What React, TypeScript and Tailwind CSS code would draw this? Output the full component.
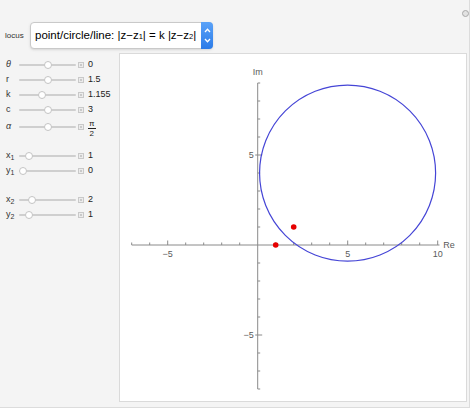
import React from "react";

const FONT = { fontFamily: '"Liberation Sans", Arial, sans-serif' };

type SliderProps = {
  label: React.ReactNode;
  pos: number; // thumb position, 0..1
  value: React.ReactNode;
  tall?: boolean;
};

function Slider({ label, pos, value, tall }: SliderProps) {
  return (
    <div className={`flex items-center ${tall ? "h-[20px]" : "h-[15px]"}`}>
      <div className="w-[19px] pl-[6px] text-[9px] text-[#333]">{label}</div>
      <div className="relative w-[57px] h-[8px] flex items-center">
        <div className="w-full h-[2px] rounded bg-[#cfcfcf]" />
        <div
          className="absolute top-0 w-[8px] h-[8px] -ml-[4px] rounded-full bg-white border border-[#c4c4c4]"
          style={{ left: `${pos * 57}px` }}
        />
      </div>
      <div className="ml-[2px] w-[6px] h-[6px] border border-[#c9c9c9] bg-[#ececec] flex items-center justify-center">
        <div className="w-[2px] h-[2px] bg-[#c9c9c9]" />
      </div>
      <div className="ml-[4px] text-[9px] text-[#222]">{value}</div>
    </div>
  );
}

function Sub({ b, s }: { b: string; s: string }) {
  return (
    <span>
      {b}
      <sub className="text-[7px]">{s}</sub>
    </span>
  );
}

function Plot() {
  const ox = 137.7;
  const oy = 191;
  const u = 18;
  const X = (x: number) => ox + x * u;
  const Y = (y: number) => oy - y * u;
  const xs = Array.from({ length: 18 }, (_, i) => i - 7);
  const ys = Array.from({ length: 18 }, (_, i) => i - 8);
  const k = 1.155;
  const k2 = k * k;
  const cx = (k2 * 2 - 1) / (k2 - 1);
  const cy = (k2 * 1 - 0) / (k2 - 1);
  const r = (k * Math.SQRT2) / (k2 - 1);
  const axis = "#8a8a8a";
  const lab = "#5a5a5a";

  return (
    <svg width="346" height="347" className="block">
      {/* x axis */}
      <line x1={X(-7)} y1={oy} x2={X(10.1)} y2={oy} stroke={axis} strokeWidth="1" />
      {xs.map((x) =>
        x === 0 ? null : (
          <line
            key={x}
            x1={X(x)}
            x2={X(x)}
            y1={oy}
            y2={oy - (x % 5 === 0 ? 4.5 : 2.5)}
            stroke={axis}
            strokeWidth="1"
          />
        )
      )}
      {/* y axis */}
      <line x1={ox} y1={Y(9)} x2={ox} y2={Y(-8)} stroke={axis} strokeWidth="1" />
      {ys.map((y) =>
        y === 0 ? null : (
          <line
            key={y}
            y1={Y(y)}
            y2={Y(y)}
            x1={ox}
            x2={ox + (y % 5 === 0 ? 4.5 : 2.5)}
            stroke={axis}
            strokeWidth="1"
          />
        )
      )}
      <line x1={ox - 2.5} x2={ox} y1={Y(5)} y2={Y(5)} stroke={axis} />
      <line x1={ox - 2.5} x2={ox} y1={Y(-5)} y2={Y(-5)} stroke={axis} />
      <g fontSize="9" fill={lab} style={FONT}>
        <text x={X(-5)} y={oy + 12} textAnchor="middle">−5</text>
        <text x={X(5)} y={oy + 12} textAnchor="middle">5</text>
        <text x={X(10)} y={oy + 12} textAnchor="middle">10</text>
        <text x={ox - 4} y={Y(5) + 3} textAnchor="end">5</text>
        <text x={ox - 4} y={Y(-5) + 3} textAnchor="end">−5</text>
        <text x={ox} y={Y(9) - 8} textAnchor="middle">Im</text>
        <text x={X(10.2) + 2} y={oy + 3}>Re</text>
      </g>
      <circle cx={X(cx)} cy={Y(cy)} r={r * u} fill="none" stroke="#4545d6" strokeWidth="1.2" />
      <circle cx={X(1)} cy={Y(0)} r="2.8" fill="#e60000" />
      <circle cx={X(2)} cy={Y(1)} r="2.8" fill="#e60000" />
    </svg>
  );
}

export default function App() {
  return (
    <div className="w-[474px] h-[410px] bg-white" style={FONT}>
      <div className="relative w-[470px] h-[408px] bg-[#f4f4f4] border-r border-b border-[#dcdcdc]">
        {/* gear */}
        <div className="absolute top-[10px] left-[462px] w-[7px] h-[7px] rounded-full border-[1.5px] border-[#a8a8a8] bg-[#e2e2e2]" />

        <div className="flex items-center pt-[22px] pl-[5px]">
          <div className="w-[25px] text-[8px] text-[#333]">locus</div>
          <div className="flex items-stretch w-[183px] h-[27px] bg-white border border-[#c9c9c9] rounded-[4px] shadow-sm">
            <div className="flex-1 min-w-0 overflow-hidden flex items-center pl-[4px] text-[11.5px] text-black whitespace-nowrap">
              point/circle/line: |z−z<sub className="text-[7.5px]">1</sub>| = k |z−z
              <sub className="text-[7.5px]">2</sub>|
            </div>
            <div className="shrink-0 w-[12px] -my-px -mr-px rounded-r-[4px] bg-gradient-to-b from-[#5aa2f8] to-[#2a7be8] flex flex-col items-center justify-center gap-[5px]">
              <svg width="7" height="5" viewBox="0 0 7 5">
                <path d="M1 4 L3.5 1.3 L6 4" fill="none" stroke="white" strokeWidth="1.3" />
              </svg>
              <svg width="7" height="5" viewBox="0 0 7 5">
                <path d="M1 1 L3.5 3.7 L6 1" fill="none" stroke="white" strokeWidth="1.3" />
              </svg>
            </div>
          </div>
        </div>

        <div className="flex mt-[4px]">
          <div className="w-[119px] pt-[4px]">
            <Slider label={<span className="italic">θ</span>} pos={0.51} value="0" />
            <Slider label="r" pos={0.51} value="1.5" />
            <Slider label="k" pos={0.4} value="1.155" />
            <Slider label="c" pos={0.51} value="3" />
            <Slider
              tall
              label={<span className="italic">α</span>}
              pos={0.51}
              value={
                <span className="inline-flex flex-col items-center leading-[9px] text-[8px]">
                  <span className="border-b border-[#222] px-[1px]">π</span>
                  <span>2</span>
                </span>
              }
            />
            <div className="mt-[11px]">
              <Slider label={<Sub b="x" s="1" />} pos={0.175} value="1" />
              <Slider label={<Sub b="y" s="1" />} pos={0.07} value="0" />
            </div>
            <div className="mt-[14px]">
              <Slider label={<Sub b="x" s="2" />} pos={0.23} value="2" />
              <Slider label={<Sub b="y" s="2" />} pos={0.175} value="1" />
            </div>
          </div>
          <div className="w-[348px] h-[349px] bg-white border border-[#dadada]">
            <Plot />
          </div>
        </div>
      </div>
    </div>
  );
}
